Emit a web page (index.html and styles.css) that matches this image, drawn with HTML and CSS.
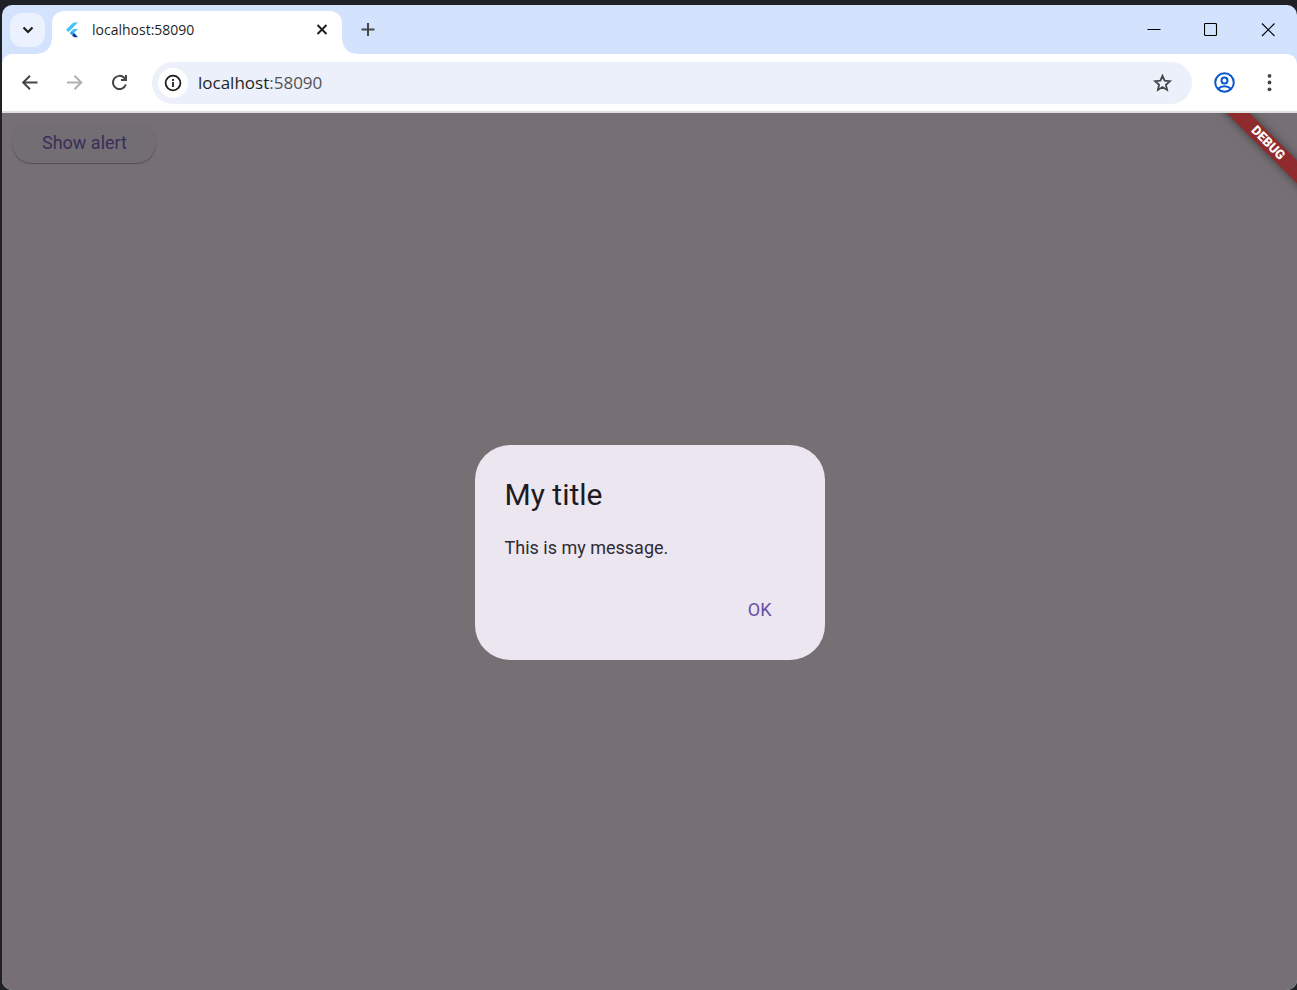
FILE: index.html
```html
<!DOCTYPE html>
<html lang="en">
<head>
<meta charset="utf-8">
<title>localhost:58090</title>
<link rel="stylesheet" href="styles.css">
</head>
<body>
<div class="window">
  <header class="tab-strip">
    <button class="tab-search" aria-label="Search tabs">
      <svg width="12" height="8" viewBox="0 0 12 8"><path d="M1.5 1.5 6 6l4.500-4.500" fill="none" stroke="#1f1f1f" stroke-width="2.200"/></svg>
    </button>
    <div class="tab">
      <svg class="favicon" width="14" height="16" viewBox="0 0 14 16">
        <path d="M8.500 0.500h4.500L3.500 10 1 7.800z" fill="#42c5f5"/>
        <path d="M8.500 7h4.500l-4 4-2.200-2.200z" fill="#42c5f5"/>
        <path d="M4.700 11 7 8.800 9.200 11 7 13.200z" fill="#29a5e8"/>
        <path d="M7 13.200 9.200 11 13 15.300H9z" fill="#0d3f91"/>
      </svg>
      <span class="tab-title">localhost:58090</span>
      <button class="icon-button tab-close" aria-label="Close tab">
        <svg width="12" height="12" viewBox="0 0 12 12"><path d="M1.500 1l9 9M10.500 1l-9 9" stroke="#1f1f1f" stroke-width="2"/></svg>
      </button>
    </div>
    <button class="icon-button new-tab" aria-label="New tab">
      <svg width="14" height="14" viewBox="0 0 14 14"><path d="M7 0v13M.5 6.500h13" stroke="#454746" stroke-width="2"/></svg>
    </button>
    <div class="window-controls">
      <button class="window-button" aria-label="Minimize"><svg width="14" height="14" viewBox="0 0 14 14"><path d="M.5 6.500h13" stroke="#000"/></svg></button>
      <button class="window-button" aria-label="Maximize"><svg width="14" height="14" viewBox="0 0 14 14"><rect x=".5" y=".5" width="12" height="12" rx="1" fill="none" stroke="#000" stroke-width="1.100"/></svg></button>
      <button class="window-button" aria-label="Close"><svg width="14" height="14" viewBox="0 0 14 14"><path d="M1 .5l12.500 12.500M13.500 .5 1 13" stroke="#000" stroke-width="1.100"/></svg></button>
    </div>
  </header>

  <nav class="toolbar" aria-label="Browser toolbar">
    <button class="icon-button tool" aria-label="Back"><svg width="18" height="18" viewBox="0 0 18 18"><path d="M16.500 8.500H2.500M9 1.700 2.200 8.500 9 15.300" fill="none" stroke="#454746" stroke-width="2"/></svg></button>
    <button class="icon-button tool" aria-label="Forward" disabled><svg width="18" height="18" viewBox="0 0 18 18"><path d="M1 8.500h14M8.500 1.700 15.300 8.500 8.500 15.300" fill="none" stroke="#b0b1b1" stroke-width="2"/></svg></button>
    <button class="icon-button tool" aria-label="Reload"><svg width="18" height="18" viewBox="0 0 18 18"><path d="M14.800 10.500A6.600 6.600 0 1 1 13.200 3.800L14.800 5.500" fill="none" stroke="#454746" stroke-width="2"/><path d="M16 1v6h-6V5h4V1z" fill="#454746"/></svg></button>
    <div class="omnibox">
      <button class="site-info" aria-label="View site information">
        <svg width="18" height="18" viewBox="0 0 18 18"><circle cx="9" cy="9" r="7.400" fill="none" stroke="#1f1f1f" stroke-width="1.800"/><path d="M8.100 8h1.800v5H8.100zM8.100 5h1.800v1.900H8.100z" fill="#1f1f1f"/></svg>
      </button>
      <a class="address" href="#">localhost<span class="port">:58090</span></a>
      <button class="icon-button bookmark" aria-label="Bookmark this tab">
        <svg width="20" height="20" viewBox="0 0 20 20"><path d="M9.500 2.800l2.100 4.900 5.300.5-4 3.500 1.200 5.200-4.600-2.800-4.600 2.800 1.200-5.200-4-3.500 5.300-.5z" fill="none" stroke="#454746" stroke-width="1.800"/></svg>
      </button>
    </div>
    <button class="icon-button profile" aria-label="Profile">
      <svg width="22" height="22" viewBox="0 0 22 22" fill="none" stroke="#0b57d0" stroke-width="2"><circle cx="10.500" cy="10.500" r="9.300"/><circle cx="10.500" cy="8.500" r="3"/><path d="M4.100 16.800c1.800-1.700 4-2.500 6.400-2.500s4.600.8 6.400 2.500"/></svg>
    </button>
    <button class="icon-button menu" aria-label="Menu">
      <svg width="18" height="18" viewBox="0 0 18 18" fill="#454746"><circle cx="8.500" cy="1.900" r="1.900"/><circle cx="8.500" cy="8.500" r="1.900"/><circle cx="8.500" cy="15.300" r="1.900"/></svg>
    </button>
  </nav>

  <main class="page">
    <button class="show-alert">Show alert</button>
    <div class="barrier">
      <section class="dialog" role="alertdialog" aria-labelledby="dialog-title" aria-describedby="dialog-message">
        <h1 class="dialog-title" id="dialog-title">My title</h1>
        <p class="dialog-message" id="dialog-message">This is my message.</p>
        <div class="dialog-actions"><button class="dialog-ok">OK</button></div>
      </section>
    </div>
    <div class="debug-banner">DEBUG</div>
  </main>
</div>
</body>
</html>
```
FILE: styles.css
```css
* {
  box-sizing: border-box;
}

body {
  margin: 0;
  background: #202126;
  font-family: "Open Sans", "Noto Sans", sans-serif;
  color: #1f1f1f;
}

button {
  border: 0;
  padding: 0;
  background: none;
  font: inherit;
  color: inherit;
}

svg {
  display: block;
}

.window {
  display: flex;
  flex-direction: column;
  min-height: calc(100vh - 5px);
  margin: 5px 0 0 2px;
  border-radius: 10px;
  background: #d3e3fd;
  overflow: hidden;
}

.tab-strip {
  display: flex;
  align-items: center;
  height: 49px;
  padding-left: 8px;
}

.icon-button,
.tab-search,
.site-info,
.window-button {
  display: flex;
  align-items: center;
  justify-content: center;
  flex: none;
}

.tab-search {
  width: 35px;
  height: 34px;
  border-radius: 12px;
  background: #ebf1fd;
}

.tab {
  position: relative;
  display: flex;
  align-items: center;
  align-self: flex-end;
  width: 290px;
  height: 43px;
  margin-left: 7px;
  padding: 0 14px 6px 13px;
  border-radius: 12px 12px 0 0;
  background: #fff;
}

.tab::before,
.tab::after {
  content: "";
  position: absolute;
  bottom: 0;
  width: 14px;
  height: 14px;
}

.tab::before {
  right: 100%;
  background: radial-gradient(circle at 0 0, transparent 13px, #fff 14px);
}

.tab::after {
  left: 100%;
  background: radial-gradient(circle at 100% 0, transparent 13px, #fff 14px);
}

.tab-title {
  flex: 1;
  margin-left: 13px;
  font-size: 14px;
  line-height: 20px;
}

.new-tab {
  width: 34px;
  height: 34px;
  margin-left: 9px;
}

.window-controls {
  display: flex;
  margin-left: auto;
  padding-right: 1px;
}

.window-button {
  width: 57px;
  height: 48px;
}

.toolbar {
  display: flex;
  align-items: center;
  height: 59px;
  padding: 0 10px;
  border-bottom: 2px solid #dfe1e0;
  border-radius: 10px 10px 0 0;
  background: #fff;
}

.tool {
  width: 35px;
  height: 35px;
  margin-right: 10px;
}

.omnibox {
  display: flex;
  align-items: center;
  flex: 1;
  height: 42px;
  margin-left: 5px;
  padding: 0 19px 0 6px;
  border-radius: 21px;
  background: #ebf0fa;
}

.site-info {
  width: 30px;
  height: 30px;
  border-radius: 50%;
  background: #fff;
}

.address {
  flex: 1;
  margin-left: 10px;
  font-size: 17px;
  line-height: 24px;
  color: #1f1f1f;
  text-decoration: none;
}

.port {
  color: #505357;
}

.profile {
  width: 35px;
  height: 35px;
  margin-left: 15px;
}

.menu {
  width: 35px;
  height: 35px;
  margin-left: 10px;
}

.page {
  position: relative;
  display: flex;
  flex: 1;
  flex-direction: column;
  align-items: flex-start;
  padding: 10px;
  background: #767074;
  font-family: Roboto, sans-serif;
  overflow: hidden;
}

.show-alert {
  height: 40px;
  padding: 0 29px 2px 30px;
  border-radius: 20px;
  background: #726e73;
  box-shadow: 0 1px 1px rgba(0, 0, 0, 0.3);
  font-size: 18px;
  color: #382f59;
}

.barrier {
  position: absolute;
  inset: 0;
  display: flex;
  align-items: center;
  justify-content: center;
  padding-top: 2px;
}

.dialog {
  width: 350px;
  padding: 30px 30px 28px;
  border-radius: 35px;
  background: #ece6f0;
}

.dialog-title {
  margin: 0 0 20px;
  font-size: 30px;
  line-height: 40px;
  font-weight: 400;
  color: #1d1b20;
}

.dialog-message {
  margin: 0 0 27px;
  font-size: 18px;
  line-height: 25px;
  color: #2f2b35;
}

.dialog-actions {
  display: flex;
  justify-content: flex-end;
}

.dialog-ok {
  height: 45px;
  padding: 0 23px;
  border-radius: 22px;
  font-size: 18px;
  color: #6750a4;
}

.debug-banner {
  position: absolute;
  top: 22px;
  right: -41px;
  width: 140px;
  transform: rotate(45deg);
  background: #8f2b2d;
  box-shadow: 0 0 10px rgba(0, 0, 0, 0.5);
  font-size: 13px;
  line-height: 16px;
  font-weight: 900;
  text-align: center;
  color: #fff;
}
```
